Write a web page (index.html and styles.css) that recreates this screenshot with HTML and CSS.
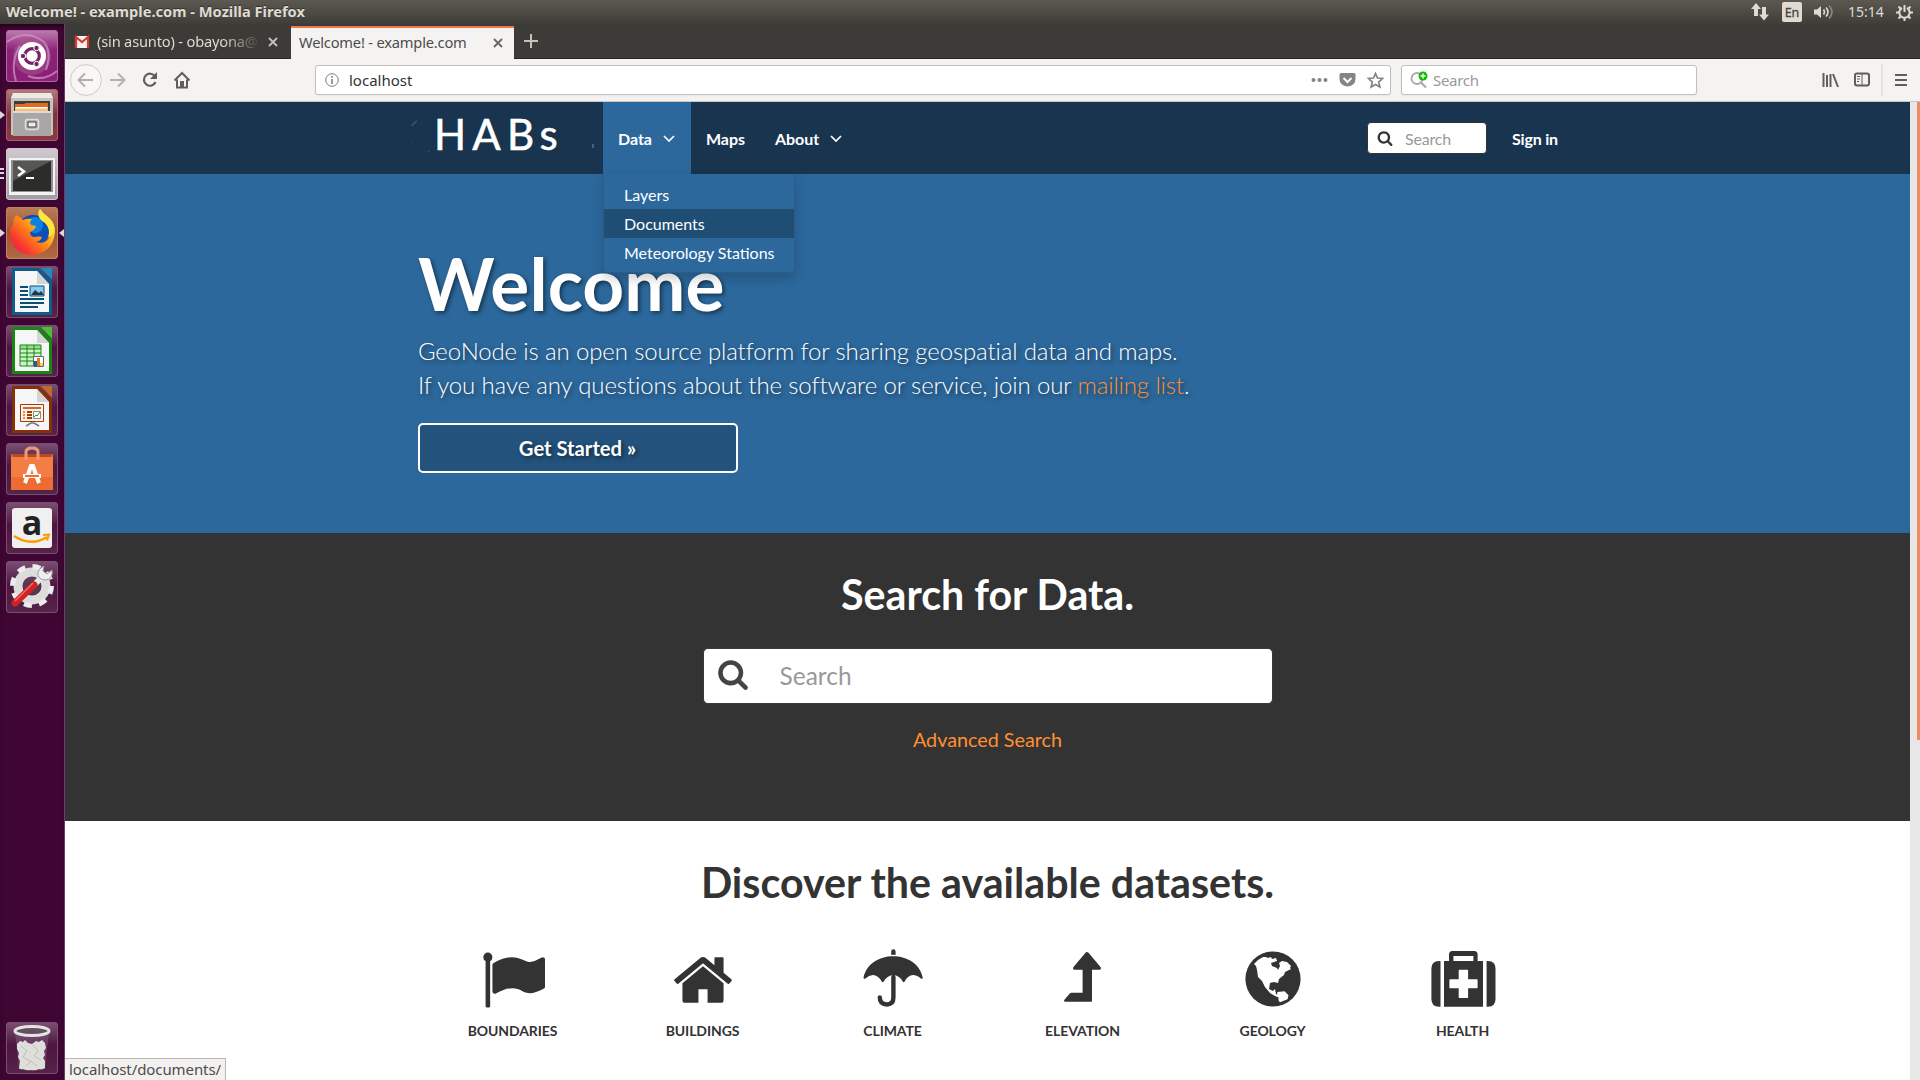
FILE: index.html
```html
<!DOCTYPE html>
<html lang="en">
<head>
<meta charset="utf-8">
<title>Welcome! - example.com</title>
<link rel="stylesheet" href="styles.css">
</head>
<body>
<header class="panel">
  <span class="panel-title">Welcome! - example.com - Mozilla Firefox</span>
  <div class="indicators">
    <svg class="ind-net" width="18" height="18" viewBox="0 0 18 18"><path d="M5 0l5 6H7v7H3V6H0zM13 17.500l-5-6h3V4h4v7.500h3z" fill="#dfdbd2"/></svg>
    <span class="ind-lang">En</span>
    <svg class="ind-sound" width="21" height="18" viewBox="0 0 21 18"><path d="M0 6.500h3L7 3v12l-4-3.500H0z" fill="#dfdbd2"/><path d="M9.500 6.500q2 2.500 0 5M12 4.500q4 4.500 0 9" fill="none" stroke="#dfdbd2" stroke-width="1.600"/><path d="M15 2.500q6 6.500 0 13" fill="none" stroke="#8b887f" stroke-width="1.600"/></svg>
    <span class="ind-clock">15:14</span>
    <svg class="ind-gear" width="17" height="17" viewBox="0 0 17 17" fill="none" stroke="#dfdbd2"><path d="M6 4a5.200 5.200 0 1 0 5 0" stroke-width="2"/><path d="M8.500 1v7M8.500 14v3M0 8.500h3M14 8.500h3M2.500 2.500l2 2M14.500 2.500l-2 2M2.500 14.500l2-2M14.500 14.500l-2-2" stroke-width="2"/></svg>
  </div>
</header>
<div class="desktop">
  <nav class="launcher">
    <div class="tile tile-dash"><svg viewBox="0 0 52 52"><circle cx="26" cy="26" r="19" fill="#a5508f" opacity=".6"/><path d="M1 12Q20-2 38 12Q46 22 40 40M10 51Q4 32 14 16M51 41Q38 52 22 46" fill="none" stroke="#cf9ac4" stroke-width="2" opacity=".7"/><circle cx="26" cy="26" r="14" fill="#fff"/><circle cx="26" cy="26" r="7.300" fill="none" stroke="#772365" stroke-width="3.200"/><g fill="#772365" stroke="#fff" stroke-width="1"><circle cx="17" cy="26" r="2.700"/><circle cx="30.500" cy="18" r="2.700"/><circle cx="30.500" cy="34" r="2.700"/></g></svg></div>
    <div class="tile tile-files"><i class="pip"></i><svg viewBox="0 0 52 52"><path d="M7 4h38l2 6v36H5V10z" fill="#c7c4c0"/><path d="M7 4h38l2 5H5z" fill="#eceae7"/><path d="M8 12h36v10H8z" fill="#3e3c38"/><path d="M9 15h9l2-1h22v8H9z" fill="#e26b22"/><path d="M9 18h33v5H9z" fill="#f9c078"/><path d="M10 18h31v1.500H10z" fill="#fff"/><path d="M7 22h38v25H7z" fill="#a9a7a5"/><path d="M7 22h38v2H7z" fill="#dedcda"/><rect x="19.500" y="30.500" width="13" height="10" rx="2" fill="#aaa" stroke="#dedede" stroke-width="1.500"/><path d="M22 33h8v5h-8z" fill="#eee" stroke="#444"/></svg></div>
    <div class="tile tile-term"><b class="pips"></b><svg viewBox="0 0 52 52"><path d="M3 10h46v37H3z" fill="#f3f3f3"/><path d="M5 12h42v32H5z" fill="#8f8f8f"/><path d="M7 13h38v30H7z" fill="#2c2c2b"/><path d="M7 13h38L7 33z" fill="#565654"/><path d="M12 19l6 4.500-6 4.500" fill="none" stroke="#fff" stroke-width="2.500"/><path d="M20 29h8v2h-8z" fill="#fff"/></svg></div>
    <div class="tile tile-fox"><i class="pip"></i><i class="pip-right"></i><svg viewBox="0 0 52 52"><defs><linearGradient id="fox" x1="1" y1="0" x2="0" y2="1"><stop offset=".2" stop-color="#fff044"/><stop offset=".5" stop-color="#ff8b16"/><stop offset=".78" stop-color="#f9342e"/><stop offset="1" stop-color="#e8118c"/></linearGradient></defs><circle cx="27" cy="24" r="16" fill="#0b4fb8"/><circle cx="29" cy="18" r="8" fill="#0a84e0"/><path d="M10 8q5 3 7 5 4-2 9-1-3 3-1 6l5 1q-1 4-6 6 0 5 5 5 4-1 7 0-1 4-6 5 9 3 14-5 2-6-1-11 1-3-5-7-8-5-4-10 4 6 9 9 6 5 6 14-2 21-23 23Q6 47 4 27q0-6 3-9 0-6 3-10z" fill="url(#fox)"/><path d="M34 2q-5 8 5 14 6 6 3 15 5-3 6-10Q47 14 41 9 36 6 34 2z" fill="#ffe63a"/></svg></div>
    <div class="tile"><svg viewBox="0 0 52 52"><path d="M6 2h27l13 13v34H6z" fill="#0d5c8d"/><path d="M35 2h11v12z" fill="#238ab9"/><path d="M9 5h22l12 13v28H9z" fill="#f6f6f6"/><path d="M31 5v13h12z" fill="#d4d4d4"/><path d="M14 21h8M14 25h8M14 29h8M14 33h24M14 37h24M14 41h18" stroke="#085078" stroke-width="2"/><path d="M24 20h14v10H24z" fill="#83cdf1" stroke="#085078"/><path d="M25 29l4-5 4 3 2-2 3 4z" fill="#333"/></svg></div>
    <div class="tile"><svg viewBox="0 0 52 52"><path d="M6 2h27l13 13v34H6z" fill="#178612"/><path d="M35 2h11v12z" fill="#43c330"/><path d="M9 5h22l12 13v28H9z" fill="#f6f6f6"/><path d="M31 5v13h12z" fill="#d4d4d4"/><path d="M14 20h21v21H14z" fill="#ccf4c6"/><path d="M14 20h21v4H14z" fill="#92e285"/><path d="M14 20h21v21H14zM14 24h21M14 28h21M14 32h21M14 36h21M21 20v21M28 20v21" fill="none" stroke="#178612"/><path d="M27.500 31.500h10v10h-10z" fill="#fff" stroke="#666"/><path d="M28 36h3v5h-3z" fill="#0369a3"/><path d="M31 33h3v8h-3z" fill="#ee7324"/><path d="M34 38h3v3h-3z" fill="#ffd320"/></svg></div>
    <div class="tile"><svg viewBox="0 0 52 52"><path d="M6 2h27l13 13v34H6z" fill="#853008"/><path d="M35 2h11v12z" fill="#c2682c"/><path d="M9 5h22l12 13v28H9z" fill="#f6f6f6"/><path d="M31 5v13h12z" fill="#d4d4d4"/><path d="M14.500 20.500h23v17h-23z" fill="#fdf3ec" stroke="#a33e03"/><path d="M17 24h18" stroke="#c46d37" stroke-width="2"/><path d="M17 28h2M17 31h2M17 34h2" stroke="#e68a54" stroke-width="2"/><path d="M21 28h5M21 31h5M21 34h5" stroke="#a33e03" stroke-width="2"/><path d="M27.500 27.500h7v7h-7z" fill="#fff" stroke="#888"/><path d="M28 33l2-2 1 1 3-4" fill="none" stroke="#2a9a2a"/><path d="M20 42l5-3h3l5 3" fill="none" stroke="#777" stroke-width="1.500"/></svg></div>
    <div class="tile"><svg viewBox="0 0 52 52"><path d="M5 11h42v36H5z" fill="#ee6c31"/><path d="M5 11h42l-3 4H8z" fill="#b84a1c"/><path d="M5 14h42v20H5z" fill="#f37e45"/><path d="M20 17V9q0-4 6-4t6 4v8" fill="none" stroke="#ef9a77" stroke-width="3"/><path d="M19 40l6-17h2l6 17" fill="none" stroke="#fff" stroke-width="4"/><path d="M17 31h18v4H17z" fill="#fff"/><path d="M19 32h14v2H19z" fill="#ee6c31"/></svg></div>
    <div class="tile tile-amazon"><svg viewBox="0 0 52 52"><rect x="6" y="6" width="40" height="40" rx="3" fill="#f0f0f0"/><text x="26" y="33" text-anchor="middle">a</text><path d="M8 34q17 11 33 1" fill="none" stroke="#f90" stroke-width="2.500"/><path d="M37 33l6-.5-2 6" fill="none" stroke="#f90" stroke-width="2"/></svg></div>
    <div class="tile"><svg viewBox="0 0 52 52"><circle cx="26" cy="25" r="14" fill="none" stroke="#dcdcdc" stroke-width="9"/><circle cx="26" cy="25" r="19.500" fill="none" stroke="#ececec" stroke-width="5" stroke-dasharray="8 7.300"/><circle cx="26" cy="25" r="9" fill="#666" opacity=".4"/><path d="M27 25l9-9" stroke="#e8e8e8" stroke-width="6"/><path d="M38 5q-7 3-6 10 4 6 11 3 4-3 3-9l-5 4-4-3z" fill="#efefef" stroke="#999"/><path d="M9 42L28 24" stroke="#cf2222" stroke-width="7" stroke-linecap="round"/><path d="M9 40L27 22" stroke="#f06b6b" stroke-width="1.500"/></svg></div>
    <div class="tile tile-trash"><svg viewBox="0 0 52 52"><path d="M9 10h34l-4 37q-13 3-26 0z" fill="#8d6b87" opacity=".4"/><path d="M11 22l3-3 3 1 2-2 3 3 4 1 4-3 3 1 3-2 3 3 1 5-2 3 1 4-2 3 2 3v7q-3 2-6 1-4 2-8 1-4 1-8-1-3 1-4-1l1-7-2-4 1-4-2-4z" fill="#dededb"/><path d="M15 24l6 5-4 6 7 4M27 23l5 6-4 5 7 4M20 44l5-5 6 5" fill="none" stroke="#bdbdb8"/><ellipse cx="26" cy="9" rx="17" ry="4.500" fill="#66505f" stroke="#e4e4e0" stroke-width="3"/></svg></div>
  </nav>
  <main class="window">
    <div class="tabbar">
      <div class="tab">
        <svg class="favicon" width="14" height="12" viewBox="0 0 14 12"><path d="M0 0h14v12H0z" fill="#f2f2f2"/><path d="M1 12V1l6 5 6-5v11" fill="none" stroke="#d93a2f" stroke-width="2.200"/></svg>
        <span class="tab-text tab-fade">(sin asunto) - obayona@</span>
        <svg class="tab-close" width="10" height="10" viewBox="0 0 10 10"><path d="M1 1l8 8M9 1L1 9" stroke="#c5c2bb" stroke-width="1.800"/></svg>
      </div>
      <div class="tab tab-active">
        <span class="tab-text">Welcome! - example.com</span>
        <svg class="tab-close" width="10" height="10" viewBox="0 0 10 10"><path d="M1 1l8 8M9 1L1 9" stroke="#666" stroke-width="1.800"/></svg>
      </div>
      <svg class="tab-new" width="14" height="14" viewBox="0 0 14 14"><path d="M7 0v14M0 7h14" stroke="#c5c2bb" stroke-width="2"/></svg>
    </div>
    <div class="toolbar">
      <svg class="nav-icons" width="128" height="34" viewBox="0 0 128 34" fill="none"><circle cx="17" cy="17" r="15.500" fill="#f8f7f6" stroke="#cfccc9"/><g stroke="#b3b1ae" stroke-width="2"><path d="M24 17H10M16 10.500L9.500 17l6.500 6.500M41 17h14M49 10.500l6.500 6.500-6.500 6.500"/></g><path d="M86 13.500A6 6 0 1 0 86.500 19" stroke="#5f5e5c" stroke-width="2.200"/><path d="M88 9v7h-7z" fill="#5f5e5c"/><path d="M105.500 17.500l7.500-7.500 7.500 7.500M108 16.500v8h10v-8" stroke="#5f5e5c" stroke-width="2"/><path d="M111 24v-6h4v6z" fill="#5f5e5c"/></svg>
      <div class="urlbar">
        <svg width="14" height="14" viewBox="0 0 14 14"><circle cx="7" cy="7" r="6.300" fill="none" stroke="#7a7a7a"/><path d="M7 6v5M7 3v1.700" stroke="#7a7a7a" stroke-width="1.500"/></svg>
        <span class="url">localhost</span>
        <svg width="73" height="18" viewBox="0 0 73 18" fill="#858585"><circle cx="2.500" cy="9" r="2"/><circle cx="8.500" cy="9" r="2"/><circle cx="14.500" cy="9" r="2"/><path d="M28.500 3.500q0-1.500 1.500-1.500h13q1.500 0 1.500 1.500v4q0 7.500-8 8-8-.5-8-8z"/><path d="M32.500 7l4 4 4-4" fill="none" stroke="#fff" stroke-width="2"/><path d="M64.500 2.500l2 4.500 5 .5-3.800 3.500 1.200 5-4.400-2.600-4.400 2.600 1.200-5L57.500 7.500l5-.5z" fill="none" stroke="#858585" stroke-width="1.700"/></svg>
      </div>
      <div class="searchbar">
        <svg width="18" height="18" viewBox="0 0 18 18"><circle cx="7" cy="7.500" r="5.500" fill="none" stroke="#aaa" stroke-width="1.800"/><path d="M11 11.500l5 5" stroke="#aaa" stroke-width="2.200"/><circle cx="13" cy="5" r="4.500" fill="#12bc00"/><path d="M13 2.500v5M10.500 5h5" stroke="#fff" stroke-width="1.400"/></svg>
        <span>Search</span>
      </div>
      <svg class="tool-icons" width="86" height="32" viewBox="0 0 86 32" fill="none" stroke="#5f5e5c"><path d="M1.500 9v14M5 11v12M8.500 10v13M11 10l5 13" stroke-width="2"/><rect x="33" y="9.500" width="14" height="12" rx="2" stroke-width="2"/><path d="M40 9.500v12M35 12.500h3M35 15h3M35 17.500h2"/><path d="M60 0v32" stroke="#d3d0cd"/><path d="M73 11h12M73 16h12M73 21h12" stroke-width="2"/></svg>
    </div>
    <div class="viewport">
      <div class="page">
        <div class="navbar">
          <svg class="brand-arc" width="20" height="40" viewBox="0 0 20 40" fill="none" stroke="#57708a"><path d="M0 8q1-3 5-5"/><path d="M16 33l2 1M0 24v1" opacity=".5"/></svg>
          <div class="brand">HABs</div>
          <svg class="brand-speck" width="2" height="4" viewBox="0 0 2 4"><path d="M1 0v4" stroke="#7b8da0"/></svg>
          <div class="menu-item menu-open">Data <svg width="12" height="8" viewBox="0 0 12 8"><path d="M1 1l5 5 5-5" fill="none" stroke="#fff" stroke-width="1.700"/></svg>
            <div class="dropdown"><a>Layers</a><a class="hover">Documents</a><a>Meteorology Stations</a></div>
          </div>
          <div class="menu-item">Maps</div>
          <div class="menu-item">About <svg width="12" height="8" viewBox="0 0 12 8"><path d="M1 1l5 5 5-5" fill="none" stroke="#fff" stroke-width="1.700"/></svg></div>
          <div class="nav-search"><svg width="16" height="16" viewBox="0 0 1792 1792"><path fill="#333" d="M1216 832q0-185-131.500-316.500t-316.500-131.500-316.500 131.500-131.500 316.500 131.500 316.500 316.500 131.500 316.500-131.500 131.500-316.500zm512 832q0 52-38 90t-90 38q-54 0-90-38l-343-342q-179 124-399 124-143 0-273.500-55.500t-225-150-150-225-55.500-273.500 55.500-273.500 150-225 225-150 273.500-55.500 273.500 55.500 225 150 150 225 55.500 273.500q0 220-124 399l343 343q37 37 37 90z"/></svg><span>Search</span></div>
          <div class="signin">Sign in</div>
        </div>
        <section class="hero">
          <h1>Welcome</h1>
          <p>GeoNode is an open source platform for sharing geospatial data and maps.<br>If you have any questions about the software or service, join our <a>mailing list</a>.</p>
          <div class="button">Get Started »</div>
        </section>
        <section class="search">
          <h2>Search for Data.</h2>
          <div class="big-search"><svg width="32" height="32" viewBox="0 0 1792 1792"><path fill="#444" d="M1216 832q0-185-131.500-316.500t-316.500-131.500-316.500 131.500-131.500 316.500 131.500 316.500 316.500 131.500 316.500-131.500 131.500-316.500zm512 832q0 52-38 90t-90 38q-54 0-90-38l-343-342q-179 124-399 124-143 0-273.500-55.500t-225-150-150-225-55.500-273.500 55.500-273.500 150-225 225-150 273.500-55.500 273.500 55.500 225 150 150 225 55.500 273.500q0 220-124 399l343 343q37 37 37 90z"/></svg><span>Search</span></div>
          <a class="advanced">Advanced Search</a>
        </section>
        <section class="datasets">
          <h2>Discover the available datasets.</h2>
          <div class="categories">
            <div class="category"><svg viewBox="0 0 1792 1792"><path d="M320 256q0 72-64 110v1266q0 13-9.500 22.500t-22.500 9.500h-64q-13 0-22.500-9.500t-9.500-22.500v-1266q-64-38-64-110 0-53 37.500-90.500t90.500-37.500 90.500 37.500 37.500 90.500zm1472 64v763q0 25-12.500 38.500t-39.500 27.500q-215 116-369 116-61 0-123.500-22t-108.500-48-115.500-48-142.500-22q-192 0-464 146-17 9-33 9-26 0-45-19t-19-45v-742q0-32 31-55 21-14 79-43 236-120 421-120 107 0 200 29t219 88q38 19 88 19 54 0 117.500-21t110-47 88-47 54.500-21q26 0 45 19t19 45z"/></svg>BOUNDARIES</div>
            <div class="category"><svg viewBox="0 0 1792 1792"><path d="M1472 992v480q0 26-19 45t-45 19h-384v-384h-256v384h-384q-26 0-45-19t-19-45v-480q0-1 .5-3t.5-3l575-474 575 474q1 2 1 6zm223-69l-62 74q-8 9-21 11h-3q-13 0-21-7l-692-577-692 577q-12 8-24 7-13-2-21-11l-62-74q-8-10-7-23.500t11-21.500l719-599q32-26 76-26t76 26l244 204v-195q0-14 9-23t23-9h192q14 0 23 9t9 23v408l219 182q10 8 11 21.500t-7 23.500z"/></svg>BUILDINGS</div>
            <div class="category"><svg viewBox="0 0 64 64"><path d="M30.200 7V3.500a2.200 2.200 0 0 1 4.400 0V7q-2.200-.3-4.400 0zM2.500 29.500C5.500 16 18 8.300 32.200 8.300S59 16 61.700 29.500q.1 1.700-1.500 1.200Q56 27 52 27q-5 0-8.300 6.500-1 1.500-2 0Q38 27 32.300 27T22.700 33.500q-1 1.500-2 0Q17 27 12 27q-4 0-8 3.700-1.600.5-1.500-1.200z"/><path d="M32.400 29v20.500q0 7-6.800 7-6.800-.5-6.800-7" fill="none" stroke="#333" stroke-width="4.400" stroke-linecap="round"/></svg>CLIMATE</div>
            <div class="category"><svg viewBox="0 0 64 64"><path d="M34.500 4.800q1.500-1.800 3 0L49.500 19q1.500 2.700-1.500 2.700h-7v31q0 1-1 1H14q-1.800-.3-.8-1.700l5.600-6.600q.6-.7 1.600-.7h11.200v-23H24q-3 0-1.500-2.700z"/></svg>ELEVATION</div>
            <div class="category"><svg viewBox="0 0 64 64"><circle cx="32" cy="31" r="27.600"/><path fill="#fff" d="M13 16l4-4 5-3 3 0 2 1 3-1 1 2 4-1 1 3-3 1-3 1 1 3 5 2 1 2 2-4-1-3 3-2 5 1 4 4-1 2 1 1-6 3-1 3-5 4-1 4-4-1-4 1-1 6 4 2 2-2 1 5 3 2 1 2-5-2-5-3-5-6-3-6-4-4-1-7-1-4zM36.500 44l7-.7 4 4-1 4-7.500 3q-2-1-1.500-5-2-2-1-5.300z"/></svg>GEOLOGY</div>
            <div class="category"><svg viewBox="0 0 64 64"><path fill-rule="evenodd" d="M9.500 13v45.700H8Q.4 58.700.4 51V20.500Q.4 13 8 13zM55.600 13H57q7.500 0 7.500 7.500V51q0 7.700-7.500 7.700h-1.400zM13 13h5V6.500Q18 3 21.500 3h21.600q3.500 0 3.500 3.500V13H52v45.700H13zM22.400 13h20V8h-20zM27.700 22.500v8.800h-8.600q-.7 0-.7.700v7.600q0 .7.700.7h8.600v9q0 .7.700.7h8q.7 0 .7-.7v-9h8.800q.7 0 .7-.7V32q0-.7-.7-.7h-8.800v-8.800q0-.7-.7-.7h-8q-.7 0-.7.700z"/></svg>HEALTH</div>
          </div>
        </section>
        <div class="status">localhost/documents/</div>
      </div>
      <div class="scrollbar"><div class="thumb"></div></div>
    </div>
  </main>
</div>
</body>
</html>
```
FILE: styles.css
```css
* { box-sizing: border-box; }
body { margin: 0; width: 1920px; height: 1080px; overflow: hidden; font-family: "Noto Sans", sans-serif; display: flex; flex-direction: column; }
svg { flex: none; display: block; overflow: visible; }

.panel { height: 24px; flex: none; display: flex; align-items: center; justify-content: space-between; padding: 0 7px 0 6px; background: linear-gradient(#5b5950, #3e3d39); color: #dfdbd2; }
.panel-title { font-weight: 700; font-size: 14.650px; line-height: 22px; padding-bottom: 2px; text-shadow: 0 -1px #33322e; }
.indicators { display: flex; align-items: center; height: 24px; }
.ind-lang { width: 20px; height: 20px; margin: 0 12px 0 13px; border-radius: 2px; background: #dfdbd2; color: #45443f; font-size: 12.500px; line-height: 21px; text-align: center; -webkit-text-stroke: .3px #45443f; }
.ind-clock { margin: 0 13px; font-size: 14px; line-height: 24px; width: 35px; white-space: nowrap; }

.desktop { flex: 1; display: flex; min-height: 0; }
.launcher { width: 65px; flex: none; padding: 6px 0 6px 6px; display: flex; flex-direction: column; gap: 7px; background: #3f0633; border-right: 1px solid #77396b; box-shadow: inset 0 4px 4px -2px #1d0318; }
.tile { position: relative; width: 52px; height: 52px; border-radius: 4px; background: linear-gradient(#7d5074, #4d1541 45%, #562449); box-shadow: inset 0 0 0 1px #77506f; flex: none; }
.tile svg { width: 52px; height: 52px; }
.tile-dash { background: linear-gradient(#bd7fb0, #8d2077 40%, #8c1f76); box-shadow: inset 0 0 0 1px #b565a5; }
.tile-files { background: linear-gradient(#b47c80, #80303a 50%, #8d3a45); box-shadow: inset 0 0 0 1px #a56269; }
.tile-term { background: linear-gradient(#cfcacd, #a39ba1); box-shadow: inset 0 0 0 1px #cbc5c9; }
.tile-fox { background: linear-gradient(#b97c58, #a4542e 50%, #b06a45); box-shadow: inset 0 0 0 1px #c08463; }
.tile-trash { margin-top: auto; }
.tile-amazon text { font: 700 34px "Open Sans", sans-serif; fill: #222; }
.pip, .pip-right { position: absolute; top: 22px; border: 4px solid transparent; }
.pip { left: -6px; border-left: 5px solid #dcd6da; border-right: 0; }
.pip-right { right: -6px; border-right: 5px solid #dcd6da; border-left: 0; }
.pips { position: absolute; left: -6px; top: 20px; width: 4px; height: 11px; background: repeating-linear-gradient(#dcd6da 0 2px, transparent 2px 4.500px); }

.window { flex: 1; display: flex; flex-direction: column; min-width: 0; }
.tabbar { height: 35px; flex: none; display: flex; align-items: center; background: #3c3b37; border-bottom: 1px solid #282724; }
.tab { width: 226px; height: 35px; padding: 2px 13px 0 10px; display: flex; align-items: center; flex: none; color: #dfdbd2; }
.tab-active { width: 223px; height: 33px; margin-top: 2px; padding: 0 11px 0 8px; background: #f4f3f1; border-top: 2px solid #f07746; color: #4c4c4c; }
.tab-text { font-size: 14.670px; letter-spacing: -.19px; line-height: 20px; padding-bottom: 2px; white-space: nowrap; }
.favicon { margin-right: 8px; }
.tab-fade { width: 164px; overflow: hidden; -webkit-mask-image: linear-gradient(90deg, #000 76%, transparent); mask-image: linear-gradient(90deg, #000 76%, transparent); }
.tab-close { margin-left: auto; }
.tab-new { margin-left: 10px; }
.toolbar { height: 43px; flex: none; display: flex; align-items: center; padding: 0 12px 0 4px; background: #f4f3f1; border-bottom: 1px solid #c9c5c0; }
.urlbar, .searchbar { height: 30px; display: flex; align-items: center; background: #fff; border: 1px solid #c3bfba; border-radius: 3px; font-size: 15px; line-height: 20px; box-shadow: 0 1px 2px #0000000d; }
.urlbar { width: 1076px; margin-left: 118px; padding: 0 6px 0 9px; color: #333; }
.url { margin: 0 auto 0 10px; }
.searchbar { width: 296px; margin-left: 10px; padding: 0 8px; color: #999; letter-spacing: -.3px; gap: 5px; }
.tool-icons { margin-left: auto; }

.viewport { flex: 1; display: flex; min-height: 0; font-family: Lato, sans-serif; }
.page { position: relative; flex: 1; min-width: 0; background: #fff; overflow: hidden; }
.scrollbar { width: 10px; background: #e7e7e7; padding-left: 7px; }
.thumb { height: 638px; background: #f08a62; }

.navbar { height: 72px; padding-left: 347px; display: flex; align-items: center; background: #18344e; color: #fff; font-weight: 700; font-size: 16px; }
.brand-arc { margin: 0 2px 0 0; }
.brand { width: 158px; height: 72px; flex: none; font-weight: 400; font-size: 42px; letter-spacing: 6.200px; line-height: 64px; -webkit-text-stroke: .6px #fff; }
.brand-speck { margin: 16px 9px 0 0; }
.menu-item { position: relative; height: 72px; padding: 2px 15px 0; display: flex; align-items: center; gap: 11px; line-height: 20px; letter-spacing: -.05px; }
.menu-open { background: #2c689c; z-index: 2; width: 88px; }
.dropdown { position: absolute; left: 0; top: 72px; width: 192px; padding: 6px 0 5px; background: #2c689c; border: 1px solid #285d8c; border-top: 0; border-radius: 0 0 4px 4px; box-shadow: 0 6px 12px #0000002d; font-weight: 400; letter-spacing: 0; }
.dropdown a { display: block; height: 29px; padding-left: 20px; line-height: 29px; white-space: nowrap; }
.dropdown .hover { background: #204d74; }
.nav-search { width: 120px; height: 32px; margin-left: auto; padding: 0 9px; display: flex; align-items: center; gap: 12px; background: #fff; border: 1px solid #333; border-radius: 4px; color: #999; font-weight: 400; letter-spacing: -.2px; }
.signin { width: 398px; padding: 1px 0 0; margin-left: 25px; letter-spacing: -.2px; }

.hero { height: 359px; padding: 70px 0 0 353px; background: #2c689c; color: #fff; text-shadow: 2px 2px 4px #00000080; }
h1, h2, p { margin: 0; }
h1 { font-size: 73px; line-height: 79px; padding-bottom: 1px; font-weight: 700; letter-spacing: .1px; }
.hero p { margin-top: 10px; font-size: 24px; font-weight: 300; line-height: 34px; letter-spacing: -.13px; }
.hero a { color: #ff8f31; }
.button { width: 320px; height: 50px; margin-top: 21px; border: 2px solid #fff; border-radius: 5px; background: #23527c; font-size: 20.200px; font-weight: 700; line-height: 46px; text-align: center; padding-right: 1px; }

.search { height: 288px; padding-top: 36px; display: flex; flex-direction: column; align-items: center; background: #333; }
h2 { font-size: 41.200px; font-weight: 700; line-height: 50px; text-align: center; }
.search h2 { color: #fff; }
.big-search { width: 570px; height: 56px; margin-top: 29px; padding: 0 12px 0 13px; display: flex; align-items: center; background: #fff; border: 1px solid #3a3a3a; border-radius: 5px; color: #999; font-size: 24.500px; }
.big-search svg { margin: -5px 31px 0 0; }
.big-search span { padding-bottom: 1px; }
.advanced { margin-top: 23px; color: #ff8f31; font-size: 19.800px; line-height: 24px; }
.datasets { padding-top: 36px; color: #333; }
.categories { display: flex; width: 1140px; margin: 41px 0 0 352.500px; }
.category { width: 190px; display: flex; flex-direction: column; align-items: center; gap: 9px; font-size: 14px; font-weight: 700; line-height: 20px; letter-spacing: -.1px; }
.category svg { width: 64px; height: 64px; fill: #333; }
.status { position: absolute; left: 0; bottom: 0; width: 161px; height: 22px; padding-left: 4px; background: #f2f1f0; border: 1px solid #b9b5b1; border-width: 1px 1px 0 0; color: #4c4c4c; font: 15px/21px "Noto Sans", sans-serif; letter-spacing: -.08px; }
```
